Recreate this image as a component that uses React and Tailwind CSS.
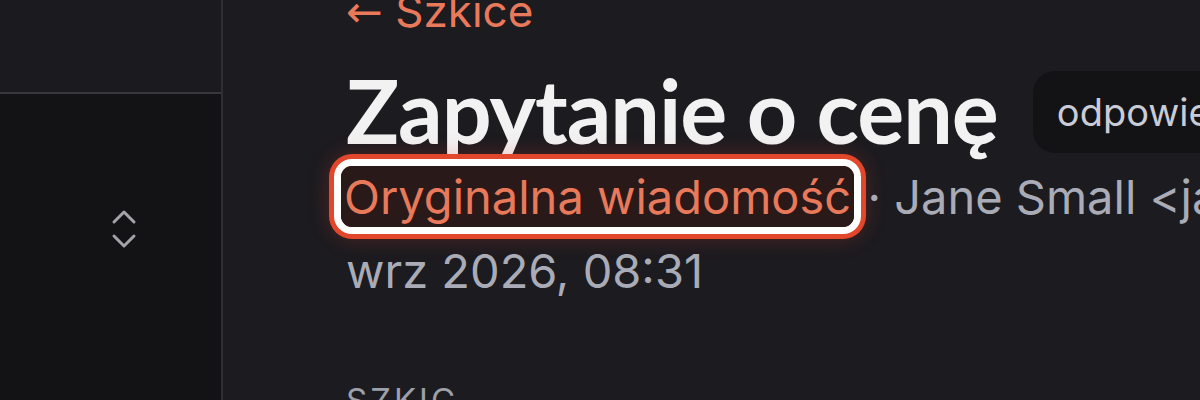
export default function App() {
  return (
    <div className="flex h-[400px] w-[1200px] overflow-hidden bg-[#1c1b20] font-['Inter',sans-serif]">
      <aside className="flex w-[223px] shrink-0 flex-col border-r-2 border-[#2f2e34]">
        <div className="h-[94px] border-b-2 border-[#38373d] bg-[#1b1a1f]" />
        <div className="flex flex-1 items-start justify-end bg-[#131316] pr-[82px] pt-[114px]">
          <svg width="30" height="42" viewBox="0 0 30 42" fill="none" stroke="#a3a3a8" strokeWidth="3" strokeLinecap="round" strokeLinejoin="round">
            <path d="M5 14 L15 4 L25 14" />
            <path d="M5 28 L15 38 L25 28" />
          </svg>
        </div>
      </aside>

      <main className="min-w-0 flex-1 overflow-hidden whitespace-nowrap pl-[123px]">
        <div className="-mt-[19px] text-[44px] leading-[60px] text-[#e8795a]">
          <span className="font-['DejaVu_Sans',sans-serif]">←</span> Szkice
        </div>

        <div className="mt-[24px] flex items-center gap-[35px]">
          <h1 className="font-['Lato',sans-serif] text-[88px] font-bold leading-none tracking-[-1px] text-[#f2f2f3]">
            Zapytanie o cenę
          </h1>
          <span className="mt-[4px] rounded-[22px] bg-[#131316] px-[24px] py-[15px] text-[38px] leading-[52px] text-[#c9ccd6]">
            odpowiedziano
          </span>
        </div>

        <div className="mt-[6px] text-[47px] leading-[74px] text-[#a9acb6]">
          <div>
            <span className="-ml-[5px] rounded-[11px] bg-[#2a1919] px-[3px] py-[2px] text-[#e8795a] shadow-[0_0_0_7px_#ffffff,0_0_0_12px_#e2472b,0_0_22px_10px_rgba(226,71,43,0.3)]">
              Oryginalna wiadomość
            </span>
            <span> · Jane Small &lt;jane.small@example.com&gt;</span>
          </div>
          <div>wrz 2026, 08:31</div>
        </div>

        <div className="mt-[68px] text-[33px] uppercase tracking-[3px] text-[#9ca0aa]">Szkic</div>
      </main>
    </div>
  );
}
